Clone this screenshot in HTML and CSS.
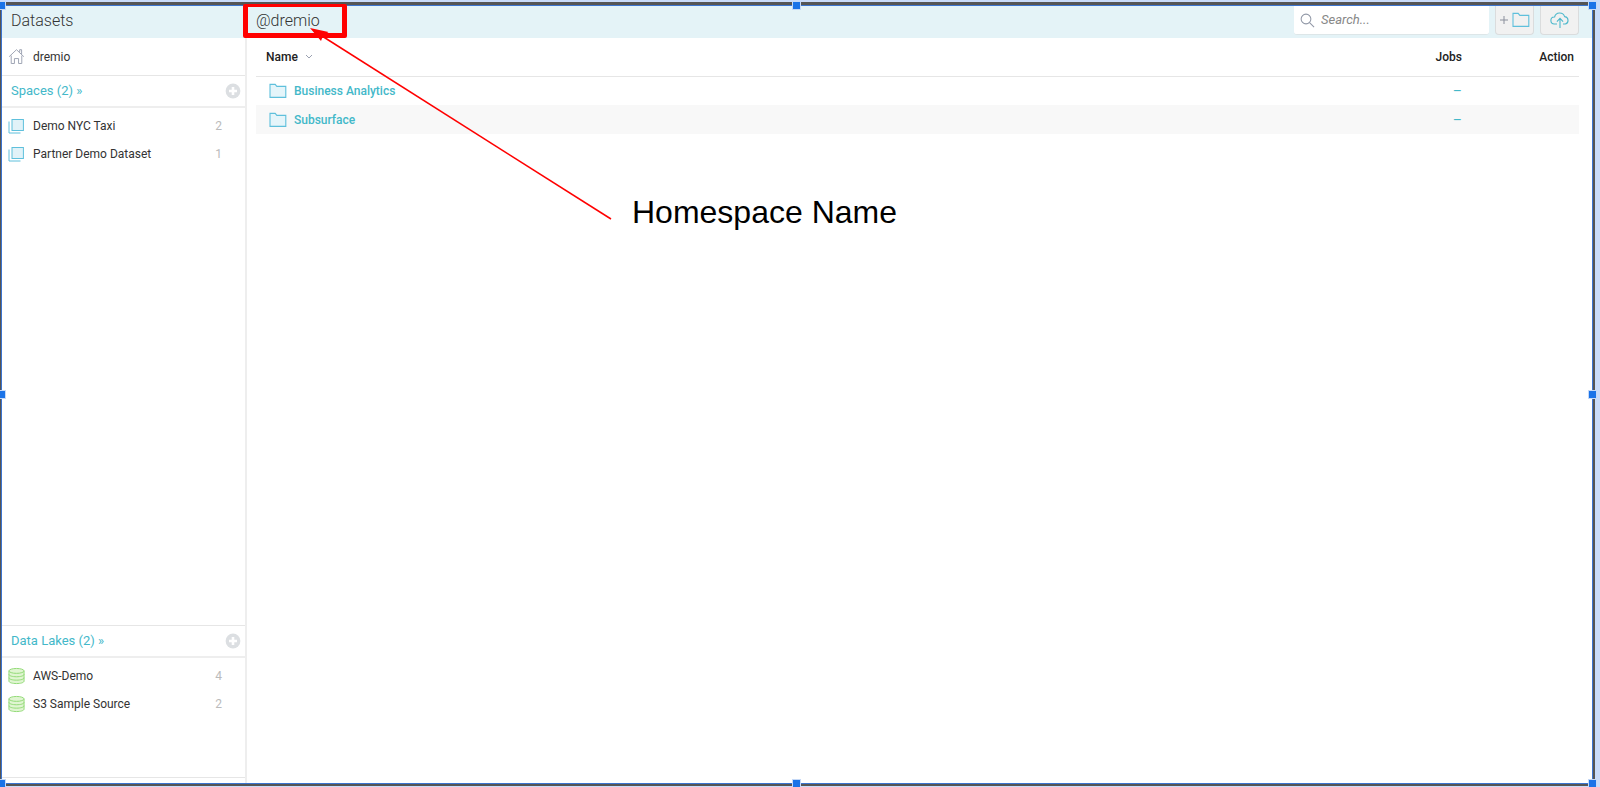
FILE: index.html
```html
<!DOCTYPE html>
<html lang="en">
<head>
<meta charset="utf-8">
<title>Datasets</title>
<link rel="stylesheet" href="styles.css">
</head>
<body>
<svg class="defs" width="0" height="0" aria-hidden="true">
  <symbol id="folder" viewBox="0 0 18 16"><path d="M1 14.4V1.4h5.2l1.6 2h9v11z" stroke-width="1.1"/></symbol>
  <symbol id="space" viewBox="0 0 17 16"><rect x="4" y="1.5" width="11.4" height="11"/><path d="M1 3.5V15h11.5" fill="none"/></symbol>
  <symbol id="plus" viewBox="0 0 16 16"><circle cx="8" cy="8" r="7.4" fill="#dcdfe2"/><path d="M8 4v8M4 8h8" stroke="#fff" stroke-width="2.6"/></symbol>
  <symbol id="lake" viewBox="0 0 18 18"><path d="M1 3.6v10.8c0 1.6 3.6 2.6 8 2.6s8-1 8-2.6V3.6"/><ellipse cx="9" cy="3.6" rx="8" ry="2.6"/><path d="M1 7.2c0 1.6 3.6 2.6 8 2.6s8-1 8-2.6M1 10.8c0 1.6 3.6 2.6 8 2.6s8-1 8-2.6" fill="none"/></symbol>
</svg>
<div class="frame">
  <div class="app">
    <aside class="sidebar">
      <h1 class="bar">Datasets</h1>
      <a class="home" href="#">
        <svg class="icon-home" viewBox="0 0 18 18"><path d="M1.2 9.2 9 1.8l7.8 7.4M3.4 8v8.4h3.4v-5.2h4.4v5.2h3.4V8M12.4 4.6V1.8h2v4.6"/></svg>
        <span>dremio</span>
      </a>
      <section class="group spaces">
        <div class="group-head"><a href="#">Spaces (2) »</a><button type="button" aria-label="Add space"><svg><use href="#plus"/></svg></button></div>
        <ul>
          <li><svg class="icon-space"><use href="#space"/></svg><a href="#">Demo NYC Taxi</a><span class="count">2</span></li>
          <li><svg class="icon-space"><use href="#space"/></svg><a href="#">Partner Demo Dataset</a><span class="count">1</span></li>
        </ul>
      </section>
      <section class="group lakes">
        <div class="group-head"><a href="#">Data Lakes (2) »</a><button type="button" aria-label="Add data lake"><svg><use href="#plus"/></svg></button></div>
        <ul>
          <li><svg class="icon-lake"><use href="#lake"/></svg><a href="#">AWS-Demo</a><span class="count">4</span></li>
          <li><svg class="icon-lake"><use href="#lake"/></svg><a href="#">S3 Sample Source</a><span class="count">2</span></li>
        </ul>
      </section>
    </aside>
    <main class="main">
      <header class="bar">
        <h2>@dremio</h2>
        <div class="tools">
          <label class="search">
            <svg viewBox="0 0 16 16"><circle cx="6.4" cy="6.4" r="5.2"/><path d="m10.2 10.2 4.8 4.8"/></svg>
            <input type="text" placeholder="Search..." aria-label="Search">
          </label>
          <button type="button" class="tool" aria-label="New folder">
            <svg class="tool-plus" viewBox="0 0 8 8"><path d="M4 0v8M0 4h8"/></svg>
            <svg class="icon-folder"><use href="#folder"/></svg>
          </button>
          <button type="button" class="tool" aria-label="Upload">
            <svg class="icon-cloud" viewBox="0 0 20 17"><path d="M7 12H4.6a3.5 3.5 0 0 1-.4-7h.4a5.2 5.2 0 0 1 10-.4 3.8 3.8 0 0 1 .8 7.4H13M10 16V6.6M6.9 9.6 10 6.4l3.1 3.2"/></svg>
          </button>
        </div>
      </header>
      <table class="files">
        <thead>
          <tr><th class="name">Name <svg class="chevron" viewBox="0 0 8 5"><path d="m1 1 3 3 3-3"/></svg></th><th class="jobs">Jobs</th><th class="action">Action</th></tr>
        </thead>
        <tbody>
          <tr><td><a class="file" href="#"><svg class="icon-folder"><use href="#folder"/></svg>Business Analytics</a></td><td class="jobs"><a href="#">–</a></td><td></td></tr>
          <tr><td><a class="file" href="#"><svg class="icon-folder"><use href="#folder"/></svg>Subsurface</a></td><td class="jobs"><a href="#">–</a></td><td></td></tr>
        </tbody>
      </table>
    </main>
  </div>
  <div class="note-box"></div>
  <svg class="note-arrow" viewBox="0 0 304 192"><path d="M12 8 301 191" stroke="#f00" stroke-width="1.5"/><path d="M0 0 18.500 4 13 8 11 13z" fill="#f00"/></svg>
  <p class="note-text">Homespace Name</p>
  <i class="handle top left"></i><i class="handle top center"></i><i class="handle top right"></i>
  <i class="handle middle left"></i><i class="handle middle right"></i>
  <i class="handle bottom left"></i><i class="handle bottom center"></i><i class="handle bottom right"></i>
</div>
</body>
</html>
```
FILE: styles.css
```css
* { box-sizing: border-box; }
body {
  margin: 0;
  font: 12px/16px Roboto, "Liberation Sans", sans-serif;
  color: #333;
}
h1, h2, ul, p { margin: 0; padding: 0; font-weight: 400; }
a { color: inherit; text-decoration: none; }
button { font: inherit; padding: 0; cursor: pointer; }
svg { display: block; flex: none; fill: none; }
.defs { position: absolute; }

.frame {
  position: relative;
  height: 100vh;
  padding: 2px 5px 1px 0;
  background: #c9dbf9;
  overflow: hidden;
}
.app {
  display: flex;
  height: 100%;
  background: #fff;
  border: solid #555;
  border-width: 3px 2px 2px 1px;
  box-shadow: inset 0 0 0 1px #3b74d0;
  padding: 1px;
}
.bar {
  display: flex;
  align-items: center;
  height: 32px;
  flex: none;
  background: #e4f3f7;
  padding: 0 9px 3px;
  font-size: 16px;
  line-height: 20px;
  font-weight: 300;
}

.sidebar { display: flex; flex-direction: column; width: 245px; flex: none; position: relative; padding-bottom: 5px; }
.sidebar::after { content: ""; position: absolute; top: 32px; right: 0; bottom: 0; width: 2px; background: #eee; }
.home { display: flex; align-items: center; gap: 8px; height: 38px; padding-left: 6px; border-bottom: 1px solid #e6e6e6; }
.icon-home { width: 17px; height: 17px; stroke: #9aa0b0; }
.spaces { flex: 1; }
.lakes { height: 153px; border-top: 1px solid #e6e6e6; border-bottom: 1px solid #e6e6e6; }
.group-head {
  display: flex;
  align-items: center;
  justify-content: space-between;
  height: 32px;
  padding: 0 6px 0 9px;
  border-bottom: 2px solid #eee;
  font-size: 13px;
  color: #43b8c9;
}
.group-head button { width: 16px; height: 16px; border: 0; background: none; }
.group-head svg { width: 16px; height: 16px; }
ul { list-style: none; padding-top: 4px; }
li { display: flex; align-items: center; gap: 8px; height: 28px; padding: 0 25px 0 6px; }
.count { margin-left: auto; color: #bbb; }
.icon-space { width: 17px; height: 16px; stroke: #5fc0dc; fill: #e1f2f8; }
.icon-lake { width: 17px; height: 18px; stroke: #8ed973; fill: #e0f5d2; }

.main { flex: 1; min-width: 0; }
.main .bar { padding-right: 13px; justify-content: space-between; }
h2 { font-size: 16px; font-weight: 300; }
.tools { display: flex; align-items: flex-start; gap: 6px; }
.search {
  display: flex;
  align-items: center;
  gap: 6px;
  width: 195px;
  height: 29px;
  padding: 0 6px;
  background: #fff;
  border-bottom: 1px solid #dde6e8;
  border-radius: 0 0 3px 3px;
}
.search svg { width: 15px; height: 15px; stroke: #9097a6; stroke-width: 1.1; }
.search input {
  flex: 1;
  min-width: 0;
  border: 0;
  padding: 0;
  outline: 0;
  background: none;
  font: italic 13px/16px Roboto, sans-serif;
}
.search input::placeholder { color: #888; }
.tool {
  display: flex;
  align-items: center;
  justify-content: center;
  gap: 4px;
  width: 39px;
  height: 29px;
  border: 1px solid #dadcdd;
  border-top: 0;
  border-radius: 0 0 4px 4px;
  background: #f1f1f1;
}
.tool-plus { width: 8px; height: 8px; stroke: #8a8f9c; }
.icon-folder { width: 18px; height: 16px; stroke: #5fc0dc; fill: #e5f5fa; }
.tool .icon-folder { fill: none; }
.icon-cloud { width: 20px; height: 17px; stroke: #4db8cc; stroke-width: 1.1; }

.files { width: calc(100% - 22px); margin: 0 13px 0 9px; border-collapse: collapse; table-layout: fixed; }
.files th { height: 38px; padding: 0; text-align: left; font-weight: 500; color: #222; border-bottom: 1px solid #e6e6e6; }
.files th.name { padding-left: 10px; }
.chevron { display: inline-block; width: 8px; height: 5px; margin: 0 0 2px 4px; stroke: #9aa0b0; }
.files th.jobs, .files td.jobs { width: 120px; text-align: right; }
.files td.jobs { font-size: 14px; font-weight: 400; }
.files th.action { width: 117px; padding-right: 5px; text-align: right; }
.files td { height: 29px; padding: 0; color: #43b8c9; font-weight: 500; }
.files tbody tr:nth-child(even) { background: #f8f8f8; }
.file { display: flex; align-items: center; gap: 7px; padding-left: 13px; }

.note-box { position: absolute; left: 243px; top: 4px; width: 104px; height: 34px; border: 5px solid #f00; border-top-width: 3px; border-radius: 2px; }
.note-arrow { position: absolute; left: 310px; top: 28px; width: 304px; height: 192px; }
.note-text { position: absolute; left: 632px; top: 194px; font: 32px/36px "Liberation Sans", Arial, sans-serif; color: #000; white-space: nowrap; }
.handle { position: absolute; width: 7px; height: 7px; background: #1a73e8; box-shadow: 0 0 0 1px #c5d9f7; }
.handle.top { top: 2px; }
.handle.middle { top: calc(50% - 3px); }
.handle.bottom { bottom: 0; }
.handle.left { left: -2px; }
.handle.center { left: calc(50% - 7px); }
.handle.right { right: 4px; }
```
